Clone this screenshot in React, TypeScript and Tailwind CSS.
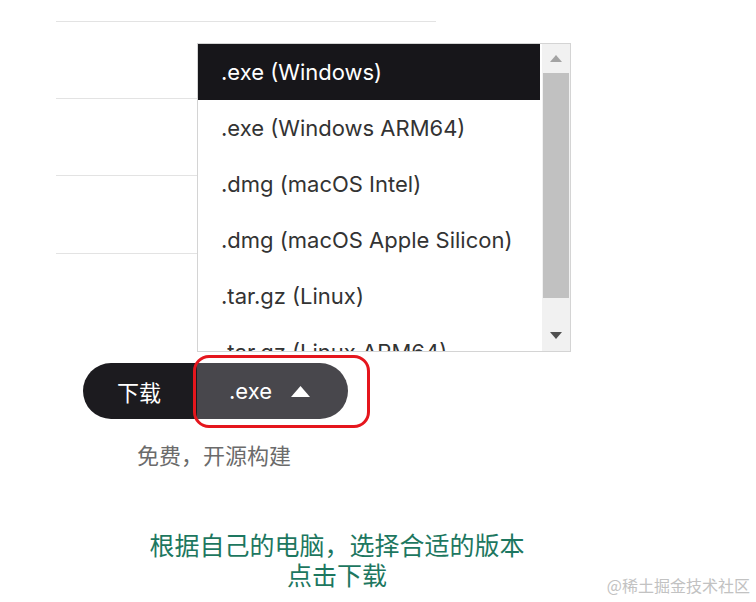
const options = [
  '.exe (Windows)',
  '.exe (Windows ARM64)',
  '.dmg (macOS Intel)',
  '.dmg (macOS Apple Silicon)',
  '.tar.gz (Linux)',
  '.tar.gz (Linux ARM64)',
];

const latin = "font-['Inter','Noto_Sans_CJK_SC',sans-serif]";
const cjk = "font-['Noto_Sans_CJK_SC',sans-serif]";

const FormatMenu = () => (
  <div className="absolute left-[197px] top-[43px] flex h-[309px] w-[374px] overflow-hidden border border-[#d4d4d4] bg-white">
    <ul className="flex-1">
      {options.map((opt, i) => (
        <li
          key={opt}
          className={`flex h-[56px] items-center pl-[23px] text-[22px] ${latin} ${
            i === 0 ? 'bg-[#17161a] text-white' : 'text-[#333]'
          }`}
        >
          {opt}
        </li>
      ))}
    </ul>
    <div className="flex w-[30px] flex-col bg-white pl-[2px]">
      <div className="flex flex-1 flex-col bg-[#f1f1f1] px-[1px]">
        <div className="flex h-[29px] items-center justify-center">
          <svg width="12" height="7" viewBox="0 0 12 7">
            <path d="M6 0 L12 7 L0 7 Z" fill="#a3a3a3" />
          </svg>
        </div>
        <div className="h-[225px] bg-[#c1c1c1]" />
        <div className="flex flex-1 items-end justify-center pb-[12px]">
          <svg width="12" height="7" viewBox="0 0 12 7">
            <path d="M0 0 L12 0 L6 7 Z" fill="#505050" />
          </svg>
        </div>
      </div>
    </div>
  </div>
);

export default function App() {
  return (
    <div className="relative flex h-[602px] w-full flex-col overflow-hidden bg-white">
      <div className="ml-[56px] mt-[21px] w-[380px]">
        <div className="h-[77px] border-t border-[#e3e3e3]" />
        <div className="h-[77px] border-t border-[#e3e3e3]" />
        <div className="h-[78px] border-t border-[#e3e3e3]" />
        <div className="border-t border-[#e3e3e3]" />
      </div>

      <div className="ml-[83px] mt-[109px] flex h-[56px] w-[265px]">
        <div className={`flex w-[114px] items-center justify-center rounded-l-full bg-[#1c1b1f] pr-[2px] text-[22px] text-white ${cjk}`}>
          下载
        </div>
        <div className={`flex flex-1 items-center justify-center gap-[19px] rounded-r-full bg-[#48474c] pr-[6px] text-[22px] text-white ${latin}`}>
          <span>.exe</span>
          <svg width="19" height="11" viewBox="0 0 19 11">
            <path d="M9.5 0 L19 11 L0 11 Z" fill="#fff" />
          </svg>
        </div>
      </div>

      <p className={`ml-[137px] mt-[20px] text-[22px] leading-[30px] text-[#6b6b6b] ${cjk}`}>
        免费，开源构建
      </p>

      <div className={`mt-[60px] w-[674px] text-center text-[25px] leading-[30px] text-[#1d7760] ${cjk}`}>
        <p>根据自己的电脑，选择合适的版本</p>
        <p>点击下载</p>
      </div>

      <FormatMenu />

      <div className="absolute left-[193px] top-[355px] h-[73px] w-[177px] rounded-[16px] border-[3px] border-[#e5161d]" />

      <span className={`absolute bottom-[5px] right-[6px] text-[16px] text-[#c2c2c2] ${cjk}`}>
        @稀土掘金技术社区
      </span>
    </div>
  );
}
